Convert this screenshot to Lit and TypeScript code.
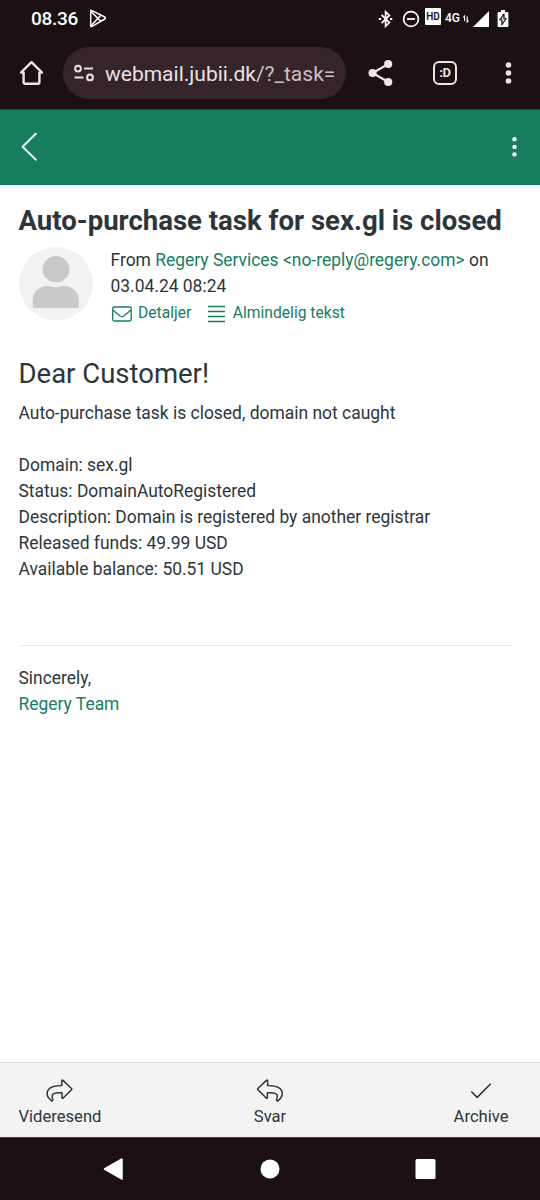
import { LitElement, html, css, svg } from "lit";
import { customElement } from "lit/decorators.js";

const statusIcons = {
  play: html`<svg class="ic" width="18" height="20" viewBox="0 0 18 20" fill="none" stroke="#fff" stroke-width="1.5" stroke-linejoin="round">
    <path d="M1.7 2.2Q1.7 1 3 1.6L15.8 8Q17 9 15.8 10L3 17.4Q1.7 18 1.7 16.8Z"/><path d="M2 2.5L11.8 12.2M2 16.8L11.8 6.2"/></svg>`,
  bluetooth: html`<svg class="ic bt" width="15" height="18" viewBox="0 0 15 18" fill="none" stroke="#fff" stroke-width="1.7">
    <path d="M3.6 4.8L11.4 12.6L7.6 16.2V1.8L11.4 5.4L3.6 13.2"/><path d="M.8 9h2.3M12 9h2.3" stroke-width="2.2"/></svg>`,
  dnd: html`<svg class="ic dnd" width="18" height="18" viewBox="0 0 18 18" fill="none" stroke="#fff" stroke-width="1.7">
    <circle cx="9" cy="9" r="7.4"/><path d="M5 9h8" stroke-width="1.8"/></svg>`,
  data: html`<svg class="ic data" width="6" height="8" viewBox="0 0 6 8" fill="none" stroke="#fff" stroke-width="1.1">
    <path d="M1.6 6V1L.3 2.4M4.2 1.5V7L5.6 5.6"/></svg>`,
  signal: html`<svg class="ic signal" width="16" height="16" viewBox="0 0 16 16"><path d="M16 0V16H0Z" fill="#fff"/></svg>`,
  battery: html`<svg class="ic battery" width="12" height="18" viewBox="0 0 12 18">
    <path d="M4 0H8V2H10.2Q11.4 2 11.400 3V16.2Q11.4 17 10.2 17H1.8Q.6 17 .6 16.2V3Q.6 2 1.8 2H4Z" fill="#fff"/>
    <path d="M6.5 4L2.600 10H4.8V15.200L9.400 8.600H7.200V4Z" fill="#1b1114" stroke="#1b1114" stroke-width=".8"/>
    <path d="M6.300 5.800L4.100 9.400H5.600V12.800L8 9.300H6.300Z" fill="#fff"/></svg>`,
};

const replyPath = svg`<path d="M11.2 1.9Q10.7 1.1 10 1.8L1.5 9.9Q.9 10.500 1.500 11.1L9.800 19.4Q10.800 20 11 19V14.2C17 13.800 20.600 14.200 20.900 17.200C21.100 19 19.900 20.800 20.300 21.900Q20.800 22.900 21.700 22C25.500 19 26.400 15 25.300 12.100C23.600 8 18.200 7 11.200 6.900Z"/>`;

@customElement("app-root")
export class AppRoot extends LitElement {
  static styles = css`
    :host {
      display: flex;
      flex-direction: column;
      width: 540px;
      height: 1200px;
      overflow: hidden;
      background: #fff;
      color: #2c363a;
      font-family: Roboto, sans-serif;
      font-size: 17.45px;
      line-height: 26.2px;
      white-space: nowrap;
    }
    * { box-sizing: border-box; }
    .ic { display: block; flex: none; }
    .status {
      display: flex;
      height: 37px;
      padding: 0 31px;
      background: #1b1114;
      color: #fff;
      align-items: center;
      flex: none;
    }
    .clock { font-size: 19px; font-weight: 500; width: 58px; margin-top: 2px; letter-spacing: -0.3px; }
    .push { flex: 1; }
    .hd {
      width: 16px; height: 17px; margin: -4px 4px 0 5px; border-radius: 1px;
      background: #fff; color: #1b1114;
      font-size: 10px; font-weight: 600; line-height: 18px; text-align: center;
    }
    .net { font-size: 12px; font-weight: 500; width: 18px; }
    .bt { margin-right: 0.5px; }
    .dnd { margin-left: 9px; }
    .signal { margin-left: 4px; }
    .battery { margin-left: 8px; }
    .browser {
      display: flex;
      align-items: center;
      height: 73px;
      padding: 0 28px 0 19px;
      background: #1b1114;
      border-bottom: 1px solid #3c3437;
      flex: none;
    }
    .url {
      display: flex;
      align-items: center;
      width: 283px;
      height: 52px;
      margin: 0 22px 0 19px;
      padding: 0 11px;
      border-radius: 26px;
      background: #35252b;
      color: #ece0e3;
      font-size: 21px;
    }
    .address { margin: 2px 0 0 11px; }
    .path { color: #cdbfc3; }
    .tabs {
      width: 24px; height: 24px; margin-left: 40px; flex: none;
      border: 2.5px solid #efe3e6; border-radius: 6px;
      color: #efe3e6; font-size: 13px; font-weight: 700; line-height: 20px; text-align: center;
      letter-spacing: -0.3px;
    }
    .toolbar {
      display: flex;
      justify-content: space-between;
      align-items: center;
      height: 75px;
      padding: 0 20px 1px 20px;
      background: #167d5f;
      flex: none;
    }
    .mail { flex: 1; padding: 20px 28px 0 18.5px; }
    h1 { margin: 0; font-size: 27.55px; line-height: 32px; font-weight: 700; }
    .header { display: flex; gap: 18px; margin-top: 9.5px; }
    .avatar { margin-top: 0.5px; }
    .green { color: #167d5f; }
    .actions { display: flex; align-items: center; font-size: 15.65px; height: 28px; padding-top: 1px; color: #167d5f; }
    .actions .ic { margin-top: 1px; }
    .actions .lines { margin-left: 15.5px; }
    .details { margin-left: 5.5px; }
    .plain { margin-left: 7px; }
    h2 { margin: 31.3px 0 10.2px; font-size: 27.5px; line-height: 32px; font-weight: 400; }
    p { margin: 0; }
    .fields { margin-top: 25px; }
    .sign { margin-top: 62.6px; padding-top: 18.6px; border-top: 1px solid #e9ebeb; }
    .bottom {
      display: grid;
      grid-template-columns: 1fr auto 1fr;
      height: 75px;
      padding: 16px 0 0;
      background: #f3f3f3;
      border-top: 1px solid #d8dadb;
      font-size: 16.6px;
      flex: none;
    }
    .item { display: flex; flex-direction: column; align-items: center; }
    .item:first-child { justify-self: start; margin-left: 18.5px; }
    .item:last-child { justify-self: end; margin-right: 31.5px; }
    .item .ic { height: 25px; margin-top: -1px; margin-bottom: 1px; }
    .nav {
      display: flex;
      justify-content: space-between;
      align-items: center;
      height: 63px;
      padding: 0 104px 0 103px;
      background: #1b1114;
      border-top: 1px solid #4a4244;
      flex: none;
    }
    .home { margin-left: 2px; }
  `;

  render() {
    return html`
      <div class="status">
        <span class="clock">08.36</span>
        ${statusIcons.play}
        <span class="push"></span>
        ${statusIcons.bluetooth}${statusIcons.dnd}
        <span class="hd">HD</span>
        <span class="net">4G</span>
        ${statusIcons.data}${statusIcons.signal}${statusIcons.battery}
      </div>
      <div class="browser">
        <svg class="ic" width="25" height="26" viewBox="0 0 25 26" fill="none" stroke="#efe3e6" stroke-width="2.4" stroke-linejoin="round">
          <path d="M12.5 2.2L2 12.5H4.6V22.6Q4.6 23.8 5.8 23.8H19.2Q20.4 23.8 20.4 22.6V12.5H23Z"/></svg>
        <div class="url">
          <svg class="ic" width="20" height="18" viewBox="0 0 20 18" fill="none" stroke="#ece0e3" stroke-width="2">
            <circle cx="4" cy="4.6" r="2.9"/><path d="M10 4.6h9M.5 13.4h9"/><circle cx="16" cy="13.4" r="2.9"/></svg>
          <span class="address">webmail.jubii.dk<span class="path">/?_task=</span></span>
        </div>
        <svg class="ic" width="25" height="28" viewBox="0 0 25 28" fill="#efe3e6">
          <path d="M20.3 5L4.5 14L20.3 23" fill="none" stroke="#efe3e6" stroke-width="2.2"/>
          <circle cx="20.2" cy="5" r="4.1"/><circle cx="4.6" cy="14" r="4.1"/><circle cx="20.2" cy="23" r="4.1"/></svg>
        <span class="tabs">:D</span>
        <span class="push"></span>
        <svg class="ic" width="7" height="24" viewBox="0 0 7 24" fill="#efe3e6">
          <circle cx="3.5" cy="4" r="2.8"/><circle cx="3.5" cy="12" r="2.8"/><circle cx="3.5" cy="20" r="2.8"/></svg>
      </div>
      <div class="toolbar">
        <svg class="ic" width="18" height="30" viewBox="0 0 18 30" fill="none" stroke="#fff" stroke-width="2" stroke-linecap="round" stroke-linejoin="round">
          <path d="M15.8 1.8L2.6 14.8L15.8 27.6"/></svg>
        <svg class="ic" width="11" height="22" viewBox="0 0 11 22" fill="#fff">
          <circle cx="5.5" cy="3.3" r="2.2"/><circle cx="5.5" cy="10.9" r="2.2"/><circle cx="5.5" cy="18.4" r="2.2"/></svg>
      </div>
      <div class="mail">
        <h1>Auto-purchase task for sex.gl is closed</h1>
        <div class="header">
          <svg class="ic avatar" width="74" height="74" viewBox="0.5 0 74 74">
            <circle cx="37.5" cy="36.8" r="36.7" fill="#f2f2f2"/>
            <circle cx="37.5" cy="22.2" r="13.3" fill="#c9c9c9"/>
            <path d="M14.200 61V54C14.200 44.500 21 39 28.500 39C32 39 33.500 40.300 37.200 40.300S42 39 45.500 39C53.500 39 60.400 44.500 60.400 54V59Q60.400 61 58.400 61H16.200Q14.200 61 14.200 59Z" fill="#c9c9c9"/></svg>
          <div>
            <div>From <span class="green">Regery Services &lt;no-reply@regery.com&gt;</span> on</div>
            <div>03.04.24 08:24</div>
            <div class="actions">
              <svg class="ic" width="22" height="18" viewBox="0.3 0 22 18" fill="none" stroke="#167d5f" stroke-width="1.3" stroke-linejoin="round">
                <rect x="2" y="2" width="18.500" height="14" rx="1.500"/><path d="M2.200 5L9.300 11Q11.200 12.300 13.200 11L20.300 5"/></svg>
              <span class="details">Detaljer</span>
              <svg class="ic lines" width="19" height="18" viewBox="0 0 19 18" stroke="#167d5f" stroke-width="1.4">
                <path d="M1 1.500H18M1 6.500H18M1 11.500H18M1 16.500H18"/></svg>
              <span class="plain">Almindelig tekst</span>
            </div>
          </div>
        </div>
        <h2>Dear Customer!</h2>
        <p>Auto-purchase task is closed, domain not caught</p>
        <div class="fields">
          <p>Domain: sex.gl</p>
          <p>Status: DomainAutoRegistered</p>
          <p>Description: Domain is registered by another registrar</p>
          <p>Released funds: 49.99 USD</p>
          <p>Available balance: 50.51 USD</p>
        </div>
        <div class="sign">
          <p>Sincerely,</p>
          <p class="green">Regery Team</p>
        </div>
      </div>
      <div class="bottom">
        <div class="item">
          <svg class="ic" width="27" height="25" viewBox="0 0 27 25" fill="none" stroke="#2c363a" stroke-width="1.5" stroke-linejoin="round">
            <g transform="matrix(-1 0 0 1 27 .6)">${replyPath}</g></svg>
          <span>Videresend</span>
        </div>
        <div class="item">
          <svg class="ic" width="27" height="25" viewBox="0 0 27 25" fill="none" stroke="#2c363a" stroke-width="1.5" stroke-linejoin="round">
            <g transform="translate(.4 .6)">${replyPath}</g></svg>
          <span>Svar</span>
        </div>
        <div class="item">
          <svg class="ic" width="22" height="25" viewBox="0 0 22 25" fill="none" stroke="#2c363a" stroke-width="1.6" stroke-linecap="round" stroke-linejoin="round">
            <path d="M1.800 14L7.200 19.400L20.200 6.200"/></svg>
          <span>Archive</span>
        </div>
      </div>
      <div class="nav">
        <svg class="ic" width="20" height="22" viewBox="0 0 20 22"><path d="M19 1V21L1.500 11Z" fill="#fff" stroke="#fff" stroke-width="1.500" stroke-linejoin="round"/></svg>
        <svg class="ic home" width="20" height="20" viewBox="0 0 20 20"><circle cx="10" cy="10" r="9.500" fill="#fff"/></svg>
        <svg class="ic" width="21" height="20" viewBox="0 0 21 20"><rect x=".5" width="20" height="20" rx="1.500" fill="#fff"/></svg>
      </div>
    `;
  }
}
